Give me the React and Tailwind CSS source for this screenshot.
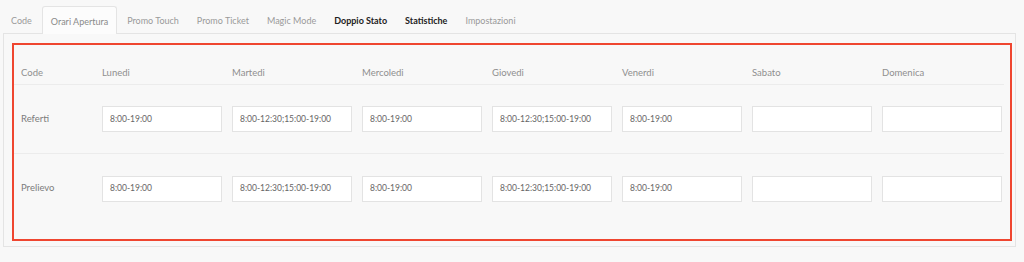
import React from "react";

const tabs = [
  { label: "Code", cls: "text-[#9a9a9a]" },
  { label: "Orari Apertura", cls: "text-[#8a8a8a]", active: true },
  { label: "Promo Touch", cls: "text-[#9a9a9a]" },
  { label: "Promo Ticket", cls: "text-[#9a9a9a]" },
  { label: "Magic Mode", cls: "text-[#9a9a9a]" },
  { label: "Doppio Stato", cls: "text-[#222] font-bold" },
  { label: "Statistiche", cls: "text-[#222] font-bold" },
  { label: "Impostazioni", cls: "text-[#9a9a9a]" },
];

const days = ["Lunedi", "Martedi", "Mercoledi", "Giovedi", "Venerdi", "Sabato", "Domenica"];
const split = "8:00-12:30;15:00-19:00";
const simple = "8:00-19:00";
const rows = [
  { name: "Referti", values: [simple, split, simple, split, simple, "", ""] },
  { name: "Prelievo", values: [simple, split, simple, split, simple, "", ""] },
];

export default function App() {
  return (
    <div
      className="w-[1024px] h-[262px] bg-[#f8f8f8] overflow-hidden"
      style={{ fontFamily: "Lato, 'Open Sans', sans-serif" }}
    >
      <div className="pt-[7px] pl-[3px] w-[1016px]">
        <div className="flex items-end h-[27px] border-b border-[#e4e4e4]">
          {tabs.map((t) => (
            <div
              key={t.label}
              className={
                t.active
                  ? "mr-[2px] h-[28px] -mb-px pt-[3px] px-[8px] flex items-center bg-[#fcfcfc] border border-b-0 border-[#e4e4e4] rounded-t-[3px] text-[9px] " + t.cls
                  : "mr-[2px] h-[27px] pt-[3px] px-[8px] flex items-center text-[9px] " + t.cls
              }
            >
              {t.label}
            </div>
          ))}
        </div>
        <div className="h-[213px] border border-t-0 border-[#e4e4e4] pl-[8px] pr-[3px] pt-[9px]">
          <div className="h-[198px] border-2 border-[#ef4630]">
            <div className="pt-[14px] w-[990px]">
              <div className="grid grid-cols-[80px_repeat(7,130px)] h-[26px] pt-[3px] items-center border-b border-[#ececec] text-[9.5px] text-[#8f8f8f]">
                <div className="pl-[7px]">Code</div>
                {days.map((d) => (
                  <div key={d} className="pl-[8px]">{d}</div>
                ))}
              </div>
              {rows.map((r, i) => (
                <div
                  key={r.name}
                  className={
                    "grid grid-cols-[80px_repeat(7,130px)] h-[69px] items-center" +
                    (i === 0 ? " border-b border-[#ececec]" : "")
                  }
                >
                  <div className="pl-[7px] text-[9.5px] text-[#7c7c7c]">{r.name}</div>
                  {r.values.map((v, j) => (
                    <div key={j} className="pl-[8px]">
                      <div className="w-[120px] h-[26px] bg-white border border-[#e3e3e3] flex items-center pl-[7px] text-[8.5px] text-[#666]">
                        {v}
                      </div>
                    </div>
                  ))}
                </div>
              ))}
            </div>
          </div>
        </div>
      </div>
    </div>
  );
}
